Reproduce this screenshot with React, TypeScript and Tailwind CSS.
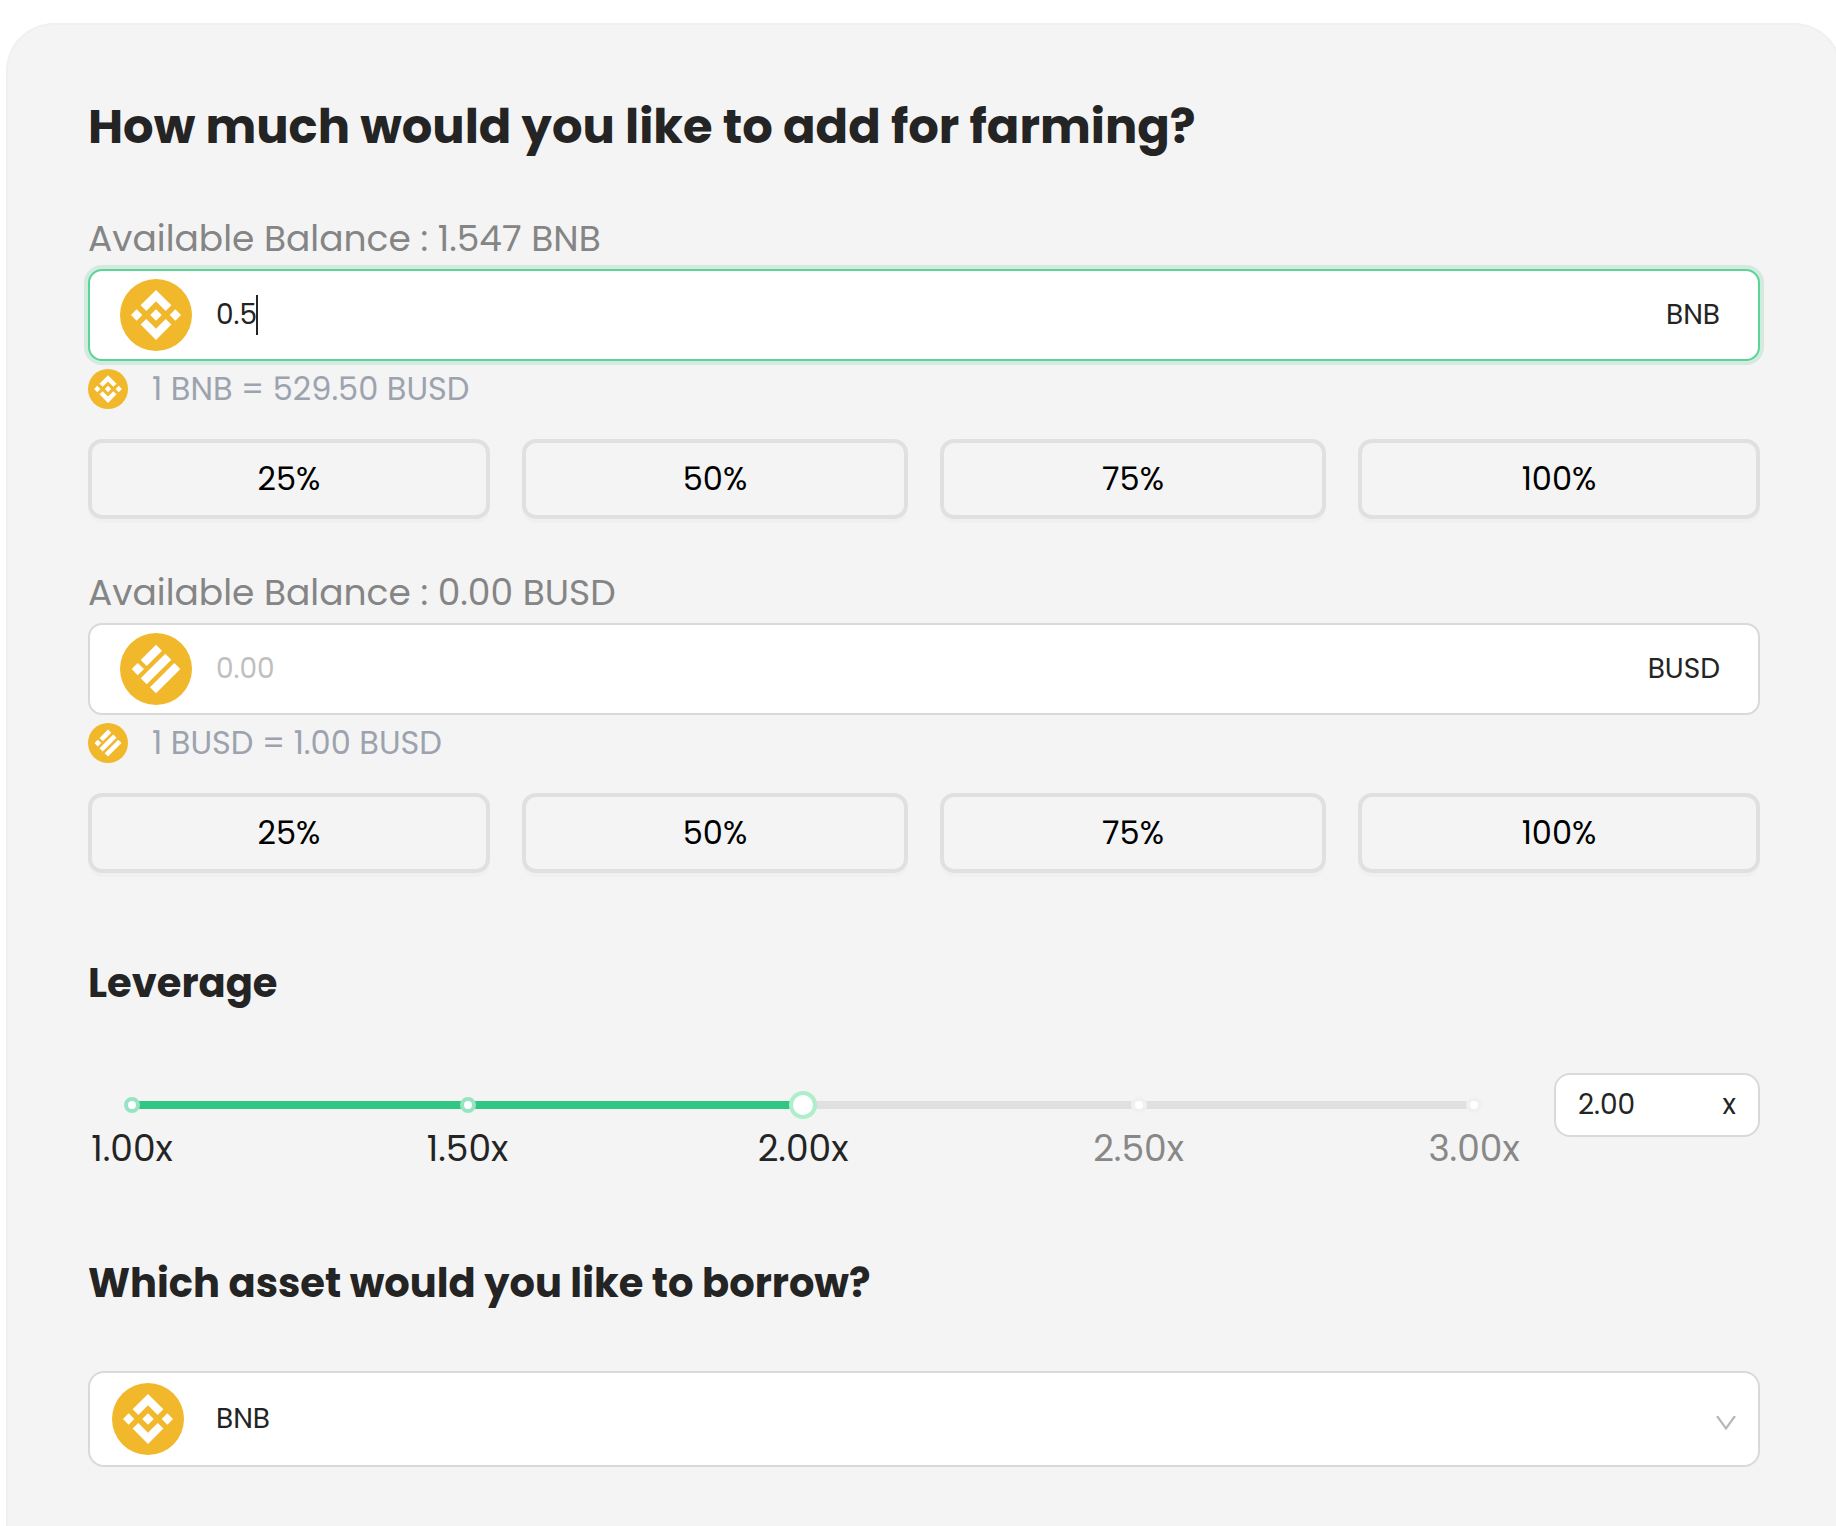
import { useState } from 'react'
import clsx from 'clsx'

const PERCENTS = ['25%', '50%', '75%', '100%']
const MARKS = [1, 1.5, 2, 2.5, 3]

function BnbIcon({ className }: { className?: string }) {
    return (
        <svg viewBox="0 0 32 32" className={className} aria-hidden="true">
            <circle cx="16" cy="16" r="16" fill="#f1b82c" />
            <g transform="translate(16 16) scale(1.11) translate(-16 -16)" fill="#fff">
                <path d="M12.116 14.404L16 10.52l3.886 3.886 2.26-2.26L16 6l-6.144 6.144z" />
                <path d="M6 16l2.26-2.26L10.52 16l-2.26 2.26z" />
                <path d="M12.116 17.596L16 21.48l3.886-3.886 2.26 2.259L16 26l-6.147-6.147z" />
                <path d="M21.48 16l2.26-2.26L26 16l-2.26 2.26z" />
                <path d="M18.294 16L16 18.294 13.706 16 16 13.706z" />
            </g>
        </svg>
    )
}

function BusdIcon({ className }: { className?: string }) {
    return (
        <svg viewBox="0 0 216 216" className={className} aria-hidden="true">
            <circle cx="108" cy="108" r="108" fill="#f1b82c" />
            <g fill="#fff">
                <path d="M35 108l18-18 19 18-19 19z" />
                <path d="M108 35l18 18-46 46-18-18z" />
                <path d="M136 62l18 18-74 74-18-18z" />
                <path d="M163 90l18 18-73 73-18-18z" />
            </g>
        </svg>
    )
}

function AssetAmount({
    id,
    symbol,
    balance,
    rate,
    active,
    value,
    onChange,
    Icon
}: {
    id: string
    symbol: string
    balance: string
    rate: string
    active?: boolean
    value: string
    onChange: (val: string) => void
    Icon: (props: { className?: string }) => React.ReactNode
}) {
    return (
        <div>
            <label htmlFor={id} className="block text-[36px] leading-[44px] text-[#858585]">
                Available Balance : {balance} {symbol}
            </label>
            <div
                className={clsx(
                    'mt-2 flex h-[92px] items-center rounded-[14px] border-2 bg-white pr-[38px] pl-[30px] text-[28px] text-[#242424]',
                    active ? 'border-[#5ad497] ring-4 ring-[#d3eadf]' : 'border-[#d9d9d9]'
                )}
            >
                <Icon className="size-[72px] shrink-0" />
                <div className="ml-6 flex flex-1 items-center">
                    <input
                        id={id}
                        type="text"
                        inputMode="decimal"
                        placeholder="0.00"
                        value={value}
                        onChange={(e) => onChange(e.target.value)}
                        className="[field-sizing:content] caret-transparent outline-none placeholder:text-[#bfbfbf]"
                    />
                    {active && <span className="-ml-px h-10 w-0.5 bg-[#242424]" />}
                </div>
                <span>{symbol}</span>
            </div>
            <div className="mt-2 flex h-10 items-center gap-6 text-[32px] text-[#9ca3af]">
                <Icon className="size-10" />
                <span>{rate}</span>
            </div>
            <div className="mt-[30px] grid grid-cols-4">
                {PERCENTS.map((percent) => (
                    <div key={percent} className="px-4 first:pl-0 last:pr-0">
                        <button
                            type="button"
                            className="h-20 w-full rounded-[14px] border-4 border-[#e0e0e0] text-[32px] text-black shadow-[0_4px_0_rgba(0,0,0,0.016)]"
                        >
                            {percent}
                        </button>
                    </div>
                ))}
            </div>
        </div>
    )
}

function LeverageSlider({ value, onChange }: { value: number; onChange: (val: number) => void }) {
    const filled = ((value - 1) / 2) * 100

    return (
        <div className="mr-20 ml-11 flex-1 pt-[18px]">
            <div className="relative flex h-7 items-center">
                <div className="h-2 w-full bg-[#e0e0e0]">
                    <div className="h-full bg-[#31c783]" style={{ width: `${filled}%` }} />
                </div>
                <div className="absolute inset-0 flex items-center justify-between">
                    {MARKS.map((mark) => (
                        <span key={mark} className="flex w-0 justify-center">
                            <span
                                className={clsx(
                                    'size-4 shrink-0 rounded-full border-4 bg-white',
                                    mark <= value ? 'border-[#98e3c1]' : 'border-[#f0f0f0]'
                                )}
                            />
                        </span>
                    ))}
                </div>
                <input
                    type="range"
                    aria-label="Leverage"
                    min={1}
                    max={3}
                    step={0.5}
                    value={value}
                    onChange={(e) => onChange(Number(e.target.value))}
                    className="absolute inset-y-0 -right-3.5 -left-3.5 appearance-none bg-transparent outline-none [&::-webkit-slider-thumb]:size-7 [&::-webkit-slider-thumb]:appearance-none [&::-webkit-slider-thumb]:rounded-full [&::-webkit-slider-thumb]:border-4 [&::-webkit-slider-thumb]:border-solid [&::-webkit-slider-thumb]:border-[#aeeecb] [&::-webkit-slider-thumb]:bg-white"
                />
            </div>
            <div className="mt-2 flex justify-between text-[36px] leading-[44px]">
                {MARKS.map((mark) => (
                    <span
                        key={mark}
                        className={clsx('flex w-0 justify-center', mark <= value ? 'text-[#242424]' : 'text-[#888888]')}
                    >
                        {mark.toFixed(2)}x
                    </span>
                ))}
            </div>
        </div>
    )
}

export default function App() {
    const [bnb, setBnb] = useState('0.5')
    const [busd, setBusd] = useState('')
    const [leverage, setLeverage] = useState(2)

    return (
        <div className="flex min-h-screen overflow-x-hidden bg-white pt-[23px] font-[Poppins,Inter,sans-serif] text-[#242424]">
            <main className="-mr-1.5 ml-1.5 flex-1 rounded-t-[48px] border-2 border-b-0 border-[#f0f0f0] bg-[#f4f4f4] px-20 pt-[74px]">
                <h1 className="text-[48px] leading-[56px] font-bold">How much would you like to add for farming?</h1>

                <div className="mt-[62px] flex flex-col gap-[52px]">
                    <AssetAmount
                        id="bnb-amount"
                        symbol="BNB"
                        balance="1.547"
                        rate="1 BNB = 529.50 BUSD"
                        active
                        value={bnb}
                        onChange={setBnb}
                        Icon={BnbIcon}
                    />
                    <AssetAmount
                        id="busd-amount"
                        symbol="BUSD"
                        balance="0.00"
                        rate="1 BUSD = 1.00 BUSD"
                        value={busd}
                        onChange={setBusd}
                        Icon={BusdIcon}
                    />
                </div>

                <h2 className="mt-[86px] text-[40px] leading-[48px] font-bold">Leverage</h2>
                <div className="mt-[66px] flex items-start">
                    <LeverageSlider value={leverage} onChange={setLeverage} />
                    <label className="flex h-16 w-[206px] items-center justify-between rounded-2xl border-2 border-[#d9d9d9] bg-white px-[22px] text-[28px]">
                        <input
                            type="text"
                            aria-label="Leverage value"
                            value={leverage.toFixed(2)}
                            readOnly
                            className="w-24 outline-none"
                        />
                        <span>x</span>
                    </label>
                </div>

                <h2 className="mt-[88px] text-[40px] leading-[48px] font-bold">
                    <label htmlFor="borrow-asset">Which asset would you like to borrow?</label>
                </h2>
                <div className="relative mt-16">
                    <select
                        id="borrow-asset"
                        className="block h-24 w-full appearance-none rounded-2xl border-2 border-[#d9d9d9] bg-white pl-[126px] text-[28px] outline-none"
                    >
                        <option>BNB</option>
                        <option>BUSD</option>
                    </select>
                    <BnbIcon className="pointer-events-none absolute top-3 left-6 size-[72px]" />
                    <svg
                        viewBox="0 0 20 14"
                        className="pointer-events-none absolute top-[45px] right-6 h-3.5 w-5"
                        fill="none"
                        stroke="#b8b8b8"
                        strokeWidth="2.2"
                        aria-hidden="true"
                    >
                        <path d="M1 0l9 12.5L19 0" />
                    </svg>
                </div>
            </main>
        </div>
    )
}
